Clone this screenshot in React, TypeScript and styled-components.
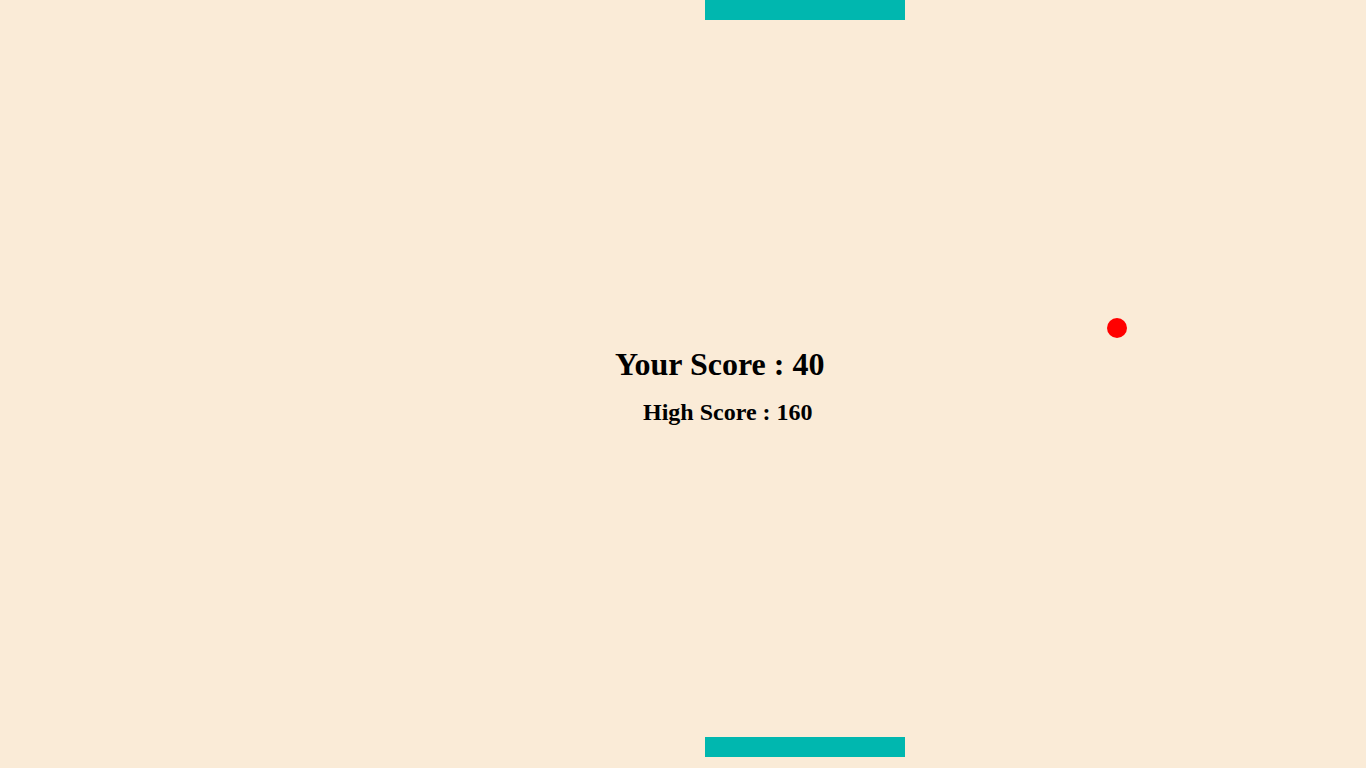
import React from "react";
import styled, { createGlobalStyle } from "styled-components";

const Global = createGlobalStyle`
  html, body { margin: 0; padding: 0; background: #faebd7; }
  body { font-family: "Liberation Serif", "Times New Roman", serif; overflow: hidden; }
`;

const Board = styled.div`
  position: relative;
  width: 1366px;
  height: 768px;
  background: #faebd7;
  overflow: hidden;
  display: flex;
  flex-direction: column;
  padding: 346px 0 0 615px;
  box-sizing: border-box;
`;

const Paddle = styled.div<{ $top: number }>`
  position: absolute;
  left: 705px;
  top: ${(p) => p.$top}px;
  width: 200px;
  height: 20px;
  background: #00b7af;
`;

const Ball = styled.div<{ $x: number; $y: number }>`
  position: absolute;
  left: ${(p) => p.$x}px;
  top: ${(p) => p.$y}px;
  width: 20px;
  height: 20px;
  border-radius: 50%;
  background: #ff0000;
`;

const ScorePanel = styled.div`
  display: flex;
  flex-direction: column;
  align-items: flex-start;
  gap: 16px;
  color: #000;
`;

const ScoreLine = styled.div<{ $size: number; $indent: number }>`
  font-size: ${(p) => p.$size}px;
  font-weight: 700;
  margin-left: ${(p) => p.$indent}px;
  white-space: nowrap;
`;

export default function App() {
  return (
    <>
      <Global />
      <Board>
        <Paddle $top={0} />
        <ScorePanel>
          <ScoreLine $size={32} $indent={0}>Your Score : 40</ScoreLine>
          <ScoreLine $size={24} $indent={28}>High Score : 160</ScoreLine>
        </ScorePanel>
        <Ball $x={1107} $y={318} />
        <Paddle $top={737} />
      </Board>
    </>
  );
}
